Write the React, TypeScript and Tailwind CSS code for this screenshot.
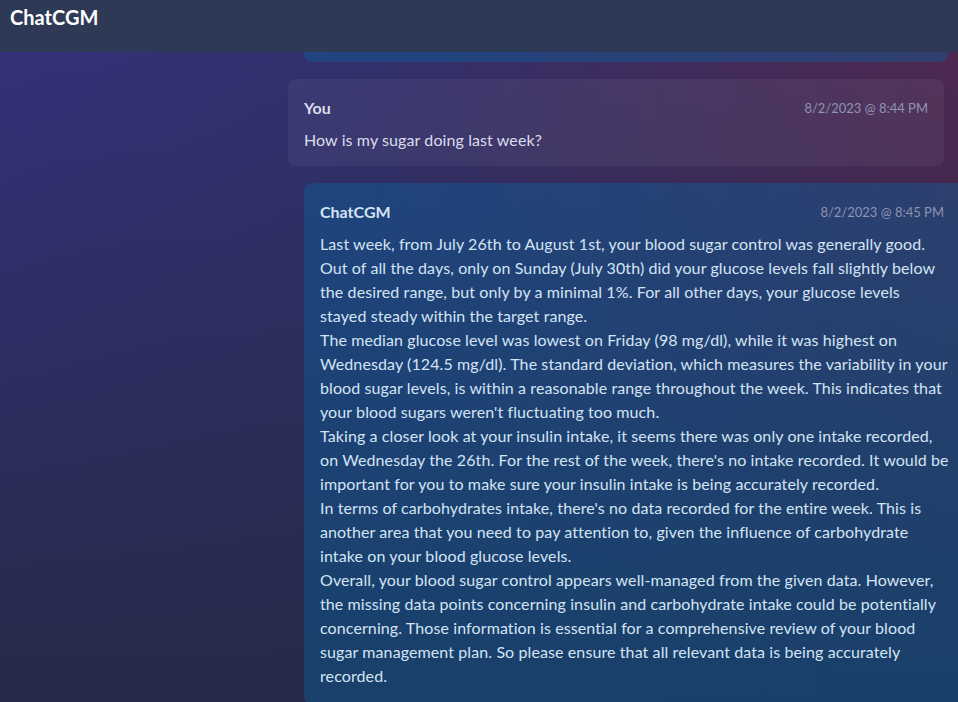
import React from "react";

type Message = {
  author: string;
  time: string;
  paragraphs: string[];
};

const question: Message = {
  author: "You",
  time: "8/2/2023 @ 8:44 PM",
  paragraphs: ["How is my sugar doing last week?"],
};

const answer: Message = {
  author: "ChatCGM",
  time: "8/2/2023 @ 8:45 PM",
  paragraphs: [
    "Last week, from July 26th to August 1st, your blood sugar control was generally good. Out of all the days, only on Sunday (July 30th) did your glucose levels fall slightly below the desired range, but only by a minimal 1%. For all other days, your glucose levels stayed\u00a0steady within the target range.",
    "The median glucose level was lowest on Friday (98 mg/dl), while it was highest on Wednesday (124.5 mg/dl). The standard deviation, which measures the variability in your blood sugar levels, is within a reasonable range throughout the week. This indicates that your blood sugars weren't fluctuating too much.",
    "Taking a closer look at your insulin intake, it seems there was only one intake recorded, on Wednesday the 26th. For the rest of the week, there's no intake recorded. It would be important for you to make sure your insulin intake is being accurately recorded.",
    "In terms of carbohydrates intake, there's no data recorded for the entire week. This is another area that you need to pay attention to, given the influence of carbohydrate intake on your blood glucose levels.",
    "Overall, your blood sugar control appears well-managed from the given data. However, the missing data points concerning insulin and carbohydrate intake could be potentially concerning. Those information is essential for a comprehensive review of your blood sugar management plan. So please ensure that all relevant data is being accurately recorded.",
  ],
};

function Bubble({ message, bot }: { message: Message; bot?: boolean }) {
  return (
    <div
      className={
        bot
          ? "ml-4 w-[662px] shrink-0 rounded-lg bg-sky-700/35 px-4 pt-[17px] pb-4 text-[#d4e4f4]"
          : "w-full rounded-lg bg-white/5 px-4 pt-[17px] pb-[14px] text-[#dcdcec]"
      }
    >
      <div className={bot ? "flex items-center justify-between pr-1.5" : "flex items-center justify-between"}>
        <span className="text-base leading-6 font-bold">{message.author}</span>
        <span className="text-[13px] leading-6 text-[#8f94b2]">{message.time}</span>
      </div>
      <div className="mt-2">
        {message.paragraphs.map((p, i) => (
          <p key={i} className="text-base leading-6 tracking-[0.1px]">
            {p}
          </p>
        ))}
      </div>
    </div>
  );
}

export default function App() {
  return (
    <div
      className="relative h-[702px] w-full overflow-hidden bg-[linear-gradient(to_bottom,rgba(37,42,72,0)_5%,#252a48_100%),linear-gradient(to_right,#34317a_0%,#33306c_40%,#4e2850_100%)]"
      style={{ fontFamily: "Lato, 'Liberation Sans', sans-serif" }}
    >
      <header className="absolute inset-x-0 top-0 z-10 h-[52px] bg-[#2e3955] px-2.5 pt-[3px]">
        <h1 className="text-xl leading-7 font-bold text-white">ChatCGM</h1>
      </header>

      <main className="ml-[288px] flex w-[656px] flex-col gap-[17px]">
        <div className="ml-4 h-[62px] w-[644px] rounded-lg bg-sky-700/35" />
        <Bubble message={question} />
        <Bubble message={answer} bot />
      </main>
    </div>
  );
}
